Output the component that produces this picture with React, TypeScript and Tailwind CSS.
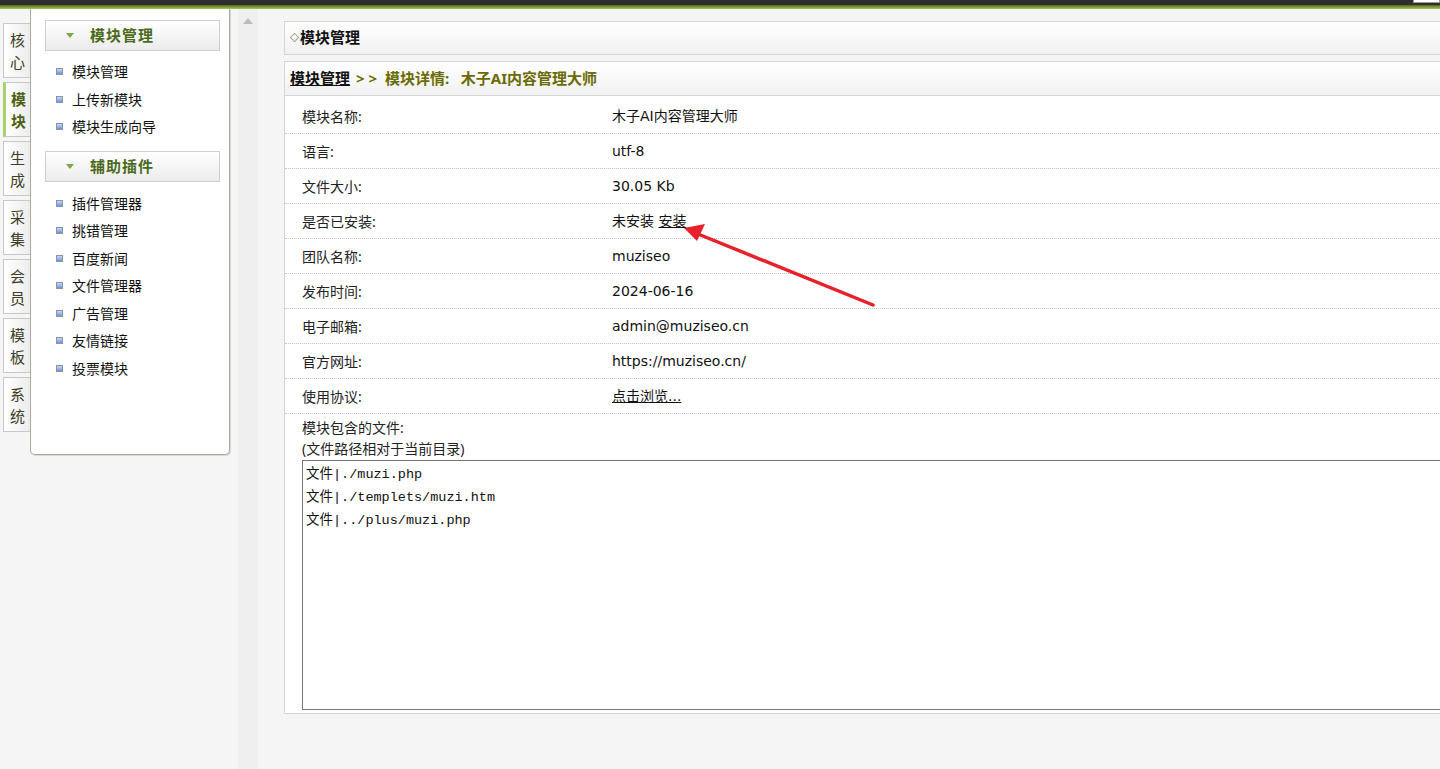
import React from "react";

const tabs = [
  { t: ["核", "心"], active: false },
  { t: ["模", "块"], active: true },
  { t: ["生", "成"], active: false },
  { t: ["采", "集"], active: false },
  { t: ["会", "员"], active: false },
  { t: ["模", "板"], active: false },
  { t: ["系", "统"], active: false },
];

const group1 = ["模块管理", "上传新模块", "模块生成向导"];
const group2 = ["插件管理器", "挑错管理", "百度新闻", "文件管理器", "广告管理", "友情链接", "投票模块"];

const rows: { label: string; value: React.ReactNode }[] = [
  { label: "模块名称:", value: "木子AI内容管理大师" },
  { label: "语言:", value: "utf-8" },
  { label: "文件大小:", value: "30.05 Kb" },
  {
    label: "是否已安装:",
    value: (
      <span>
        未安装 <span className="underline">安装</span>
      </span>
    ),
  },
  { label: "团队名称:", value: "muziseo" },
  { label: "发布时间:", value: "2024-06-16" },
  { label: "电子邮箱:", value: "admin@muziseo.cn" },
  { label: "官方网址:", value: "https://muziseo.cn/" },
  { label: "使用协议:", value: <span className="underline">点击浏览...</span> },
];

function SideHeader({ title }: { title: string }) {
  return (
    <div className="h-[31px] border border-[#cfcfcf] bg-[linear-gradient(to_bottom,#ffffff,#ececec)] flex items-center">
      <svg width="8" height="5" viewBox="0 0 8 5" className="ml-[20px] mr-[16px]">
        <path d="M0 0 L8 0 L4 5 Z" fill="#7aa94a" />
      </svg>
      <span className="text-[15px] font-bold text-[#4b6a1c] tracking-[1px]">{title}</span>
    </div>
  );
}

function SideItem({ text }: { text: string }) {
  return (
    <div className="h-[27.5px] flex items-center">
      <span className="ml-[11px] w-[7px] h-[7px] border border-[#8a94a8] bg-[linear-gradient(to_bottom,#c8d8f6,#6f93d6)] inline-block" />
      <span className="ml-[9px] text-[14px] text-[#111]">{text}</span>
    </div>
  );
}

export default function App() {
  return (
    <div className="w-[1440px] h-[769px] overflow-hidden bg-[#f5f5f5] relative font-['Noto_Sans','Noto_Sans_CJK_SC',sans-serif] text-[#222]">
      {/* top bar */}
      <div className="h-[9px] bg-[linear-gradient(to_bottom,#2e2e2e_0px,#2e2e2e_5px,#4f6420_5px,#7c9a33_7px,#a8c45e_9px)]" />
      <div className="absolute right-0 top-0 w-[27px] h-[3px] bg-white border border-t-0 border-[#999]" />

      <div className="flex h-[760px]">
        {/* left tabs */}
        <div className="w-[30px] pt-[14px] pl-[3px] flex flex-col gap-[4px]">
          {tabs.map((tab, i) => (
            <div
              key={i}
              className={
                "h-[55px] w-[28px] border border-r-0 border-[#c8c8c8] bg-[linear-gradient(to_right,#ffffff,#ececec)] flex flex-col items-center justify-center text-[15px] leading-[22px] " +
                (tab.active ? "border-l-[3px] border-l-[#a9d26b] text-[#4d5f12] font-bold" : "text-[#3d3d28]")
              }
            >
              <span>{tab.t[0]}</span>
              <span>{tab.t[1]}</span>
            </div>
          ))}
        </div>

        {/* menu panel */}
        <div className="w-[200px] h-[446px] bg-white border border-t-0 border-[#a9ab9c] rounded-b-[5px] pl-[14px] pr-[9px] pt-[11px] shadow-[1px_1px_0_#d8d8d8]">
          <SideHeader title="模块管理" />
          <div className="pt-[7px] pb-[10px]">
            {group1.map((t) => (
              <SideItem key={t} text={t} />
            ))}
          </div>
          <SideHeader title="辅助插件" />
          <div className="pt-[8px]">
            {group2.map((t) => (
              <SideItem key={t} text={t} />
            ))}
          </div>
        </div>

        {/* scroll column */}
        <div className="w-[8px]" />
        <div className="w-[20px] bg-[#efefef] flex justify-center pt-[9px]">
          <svg width="10" height="6" viewBox="0 0 10 6">
            <path d="M0 6 L5 0 L10 6 Z" fill="#bdbdbd" />
          </svg>
        </div>

        {/* main */}
        <div className="flex-1 overflow-hidden pl-[26px] pt-[12px]">
          <div className="w-[1200px]">
            <div className="h-[34px] border border-[#d6d6d6] bg-[linear-gradient(to_bottom,#ffffff,#f1f1f1)] flex items-center pl-[5px] pb-[1px] text-[15px] font-bold text-[#111]">
              <span className="text-[9px] mr-[1px]">◇</span>模块管理
            </div>

            <div className="mt-[6px] h-[653px] border border-[#d6d6d6] bg-white">
              <div className="h-[34px] border-b border-[#d6d6d6] bg-[linear-gradient(to_bottom,#ffffff,#f1f1f1)] flex items-center pl-[5px] pb-[1px] text-[15px] font-bold">
                <span className="underline text-[#111]">模块管理</span>
                <span className="text-[#6b6b00] ml-[6px] whitespace-pre">{"> >  模块详情:   木子AI内容管理大师"}</span>
              </div>

              <div className="pt-[3px]">
                {rows.map((r) => (
                  <div key={r.label} className="h-[35px] border-b border-dotted border-[#c4c4c4] flex items-center text-[14px]">
                    <div className="w-[327px] pl-[17px] text-[#222]">{r.label}</div>
                    <div className="text-[#111] font-['DejaVu_Sans','Noto_Sans_CJK_SC',sans-serif]">{r.value}</div>
                  </div>
                ))}
              </div>

              <div className="pl-[17px] pt-[3px] text-[14px] leading-[21px] text-[#222]">
                <div>模块包含的文件:</div>
                <div>(文件路径相对于当前目录)</div>
                <div className="mt-[1px] h-[250px] border border-[#767676] pl-[3px] pt-[2px] font-['Liberation_Mono','Noto_Sans_CJK_SC',monospace] text-[13.5px] leading-[23px] text-[#111]">
                  <div>文件|./muzi.php</div>
                  <div>文件|./templets/muzi.htm</div>
                  <div>文件|../plus/muzi.php</div>
                </div>
              </div>
            </div>
          </div>
        </div>
      </div>

      {/* red arrow annotation */}
      <svg className="absolute left-0 top-0 pointer-events-none" width="1440" height="769">
        <line x1="873" y1="305" x2="698" y2="234" stroke="#e8202a" strokeWidth="3.5" strokeLinecap="round" />
        <path d="M684 228 L705 224 L697 241 Z" fill="#e8202a" />
      </svg>
    </div>
  );
}
